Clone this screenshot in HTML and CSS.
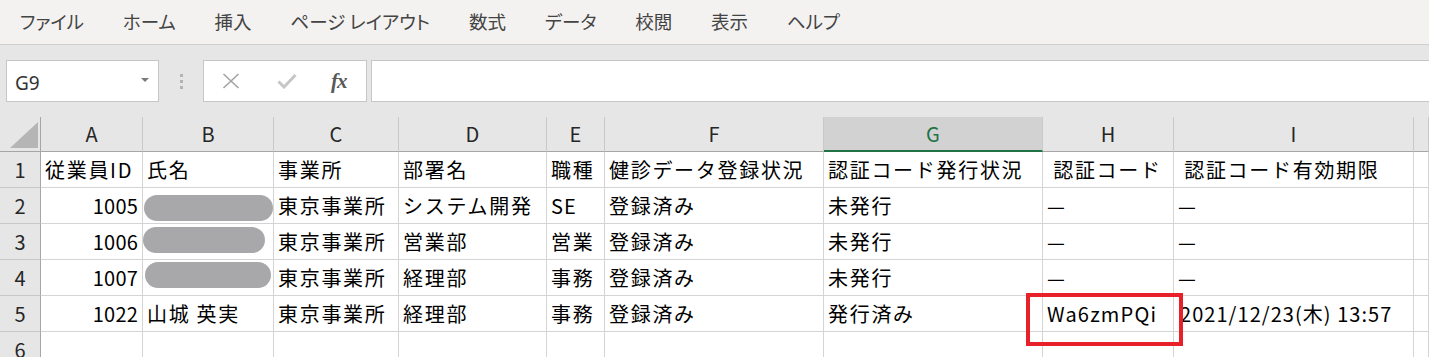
FILE: index.html
```html
<!DOCTYPE html>
<html lang="ja">
<head>
<meta charset="utf-8">
<title>Excel</title>
<link rel="stylesheet" href="styles.css">
</head>
<body>
<div class="app">
  <nav class="menu">
    <span class="menu-item">ファイル</span>
    <span class="menu-item">ホーム</span>
    <span class="menu-item">挿入</span>
    <span class="menu-item">ページ レイアウト</span>
    <span class="menu-item">数式</span>
    <span class="menu-item">データ</span>
    <span class="menu-item">校閲</span>
    <span class="menu-item">表示</span>
    <span class="menu-item">ヘルプ</span>
  </nav>
  <div class="formula-bar">
    <div class="name-box">
      <span class="name-text">G9</span>
      <svg class="dd" width="8" height="5" viewBox="0 0 8 5"><path d="M0 0h8L4 4z" fill="#7a7a7a"/></svg>
    </div>
    <div class="grip"><i></i><i></i><i></i></div>
    <div class="fx-buttons">
      <svg class="btn-x" width="18" height="16" viewBox="0 0 18 16"><path d="M1.5 1l15 14M16.5 1l-15 14" stroke="#a3a3a3" stroke-width="1.6" fill="none"/></svg>
      <svg class="btn-ok" width="20" height="16" viewBox="0 0 20 16"><path d="M1.5 8.5l5.5 5.5L18.5 2" stroke="#c6c6c6" stroke-width="3" fill="none"/></svg>
      <span class="btn-fx">fx</span>
    </div>
    <div class="formula-input"></div>
  </div>
  <div class="sheet">
    <div class="corner"><svg width="41" height="35" viewBox="0 0 41 35"><path d="M10 31L38 5V31z" fill="#b5b5b5"/></svg></div>
    <div class="ch">A</div><div class="ch">B</div><div class="ch">C</div><div class="ch">D</div><div class="ch">E</div><div class="ch">F</div><div class="ch ch-sel">G</div><div class="ch">H</div><div class="ch">I</div><div class="ch"></div>

    <div class="rh">1</div>
    <div class="c">従業員ID</div><div class="c">氏名</div><div class="c">事業所</div><div class="c">部署名</div><div class="c">職種</div><div class="c">健診データ登録状況</div><div class="c">認証コード発行状況</div><div class="c">&nbsp;認証コード</div><div class="c">&nbsp;認証コード有効期限</div><div class="c"></div>

    <div class="rh">2</div>
    <div class="c num">1005</div><div class="c redact"><span class="pill pill-2"></span></div><div class="c">東京事業所</div><div class="c">システム開発</div><div class="c lat">SE</div><div class="c">登録済み</div><div class="c">未発行</div><div class="c">—</div><div class="c">—</div><div class="c"></div>

    <div class="rh">3</div>
    <div class="c num">1006</div><div class="c redact"><span class="pill pill-3"></span></div><div class="c">東京事業所</div><div class="c">営業部</div><div class="c">営業</div><div class="c">登録済み</div><div class="c">未発行</div><div class="c">—</div><div class="c">—</div><div class="c"></div>

    <div class="rh">4</div>
    <div class="c num">1007</div><div class="c redact"><span class="pill pill-4"></span></div><div class="c">東京事業所</div><div class="c">経理部</div><div class="c">事務</div><div class="c">登録済み</div><div class="c">未発行</div><div class="c">—</div><div class="c">—</div><div class="c"></div>

    <div class="rh">5</div>
    <div class="c num">1022</div><div class="c">山城 英実</div><div class="c">東京事業所</div><div class="c">経理部</div><div class="c">事務</div><div class="c">登録済み</div><div class="c">発行済み</div><div class="c lat hl">Wa6zmPQi<span class="red-box"></span></div><div class="c lat date">2021/12/23(木) 13:57</div><div class="c"></div>

    <div class="rh">6</div>
    <div class="c"></div><div class="c"></div><div class="c"></div><div class="c"></div><div class="c"></div><div class="c"></div><div class="c"></div><div class="c"></div><div class="c"></div><div class="c"></div>
  </div>
</div>
</body>
</html>
```
FILE: styles.css
```css
* { box-sizing: border-box; }
html, body { margin: 0; padding: 0; }
body {
  width: 1429px;
  height: 357px;
  overflow: hidden;
  background: #ffffff;
  font-family: "Noto Sans CJK JP", "Noto Sans", sans-serif;
}
.app { display: flex; flex-direction: column; }

.menu {
  height: 45px;
  background: #f3f2f1;
  border-bottom: 1px solid #d2d0ce;
  display: flex;
  align-items: center;
  padding-left: 20px;
  gap: 38.8px;
  font-size: 18.5px;
  color: #444;
  font-feature-settings: "palt";
}
.menu-item { line-height: 1; padding-bottom: 2px; }

.formula-bar {
  height: 72px;
  background: #e6e6e6;
  display: flex;
  align-items: flex-start;
  padding-top: 15px;
}
.name-box {
  margin-left: 6px;
  width: 153px;
  height: 42px;
  background: #fff;
  border: 1px solid #c6c6c6;
  display: flex;
  align-items: center;
  justify-content: space-between;
  padding: 0 9px 0 8px;
}
.name-text {
  font-family: "Noto Sans", sans-serif;
  font-size: 19px;
  color: #333;
  padding-top: 4px;
}
.dd { margin-bottom: 1px; }
.grip {
  width: 44px;
  height: 42px;
  display: flex;
  flex-direction: column;
  align-items: center;
  justify-content: center;
  gap: 3px;
}
.grip i { display: block; width: 3px; height: 3px; background: #b3b3b3; }
.fx-buttons {
  width: 164px;
  height: 42px;
  background: #fff;
  border: 1px solid #c6c6c6;
  display: flex;
  align-items: center;
  padding-left: 18px;
}
.btn-x { margin-right: 37px; }
.btn-ok { margin-right: 34px; }
.btn-fx {
  font-family: "Liberation Serif", serif;
  font-style: italic;
  font-weight: bold;
  font-size: 21px;
  color: #595959;
  letter-spacing: -1px;
}
.formula-input {
  margin-left: 4px;
  flex: 1;
  height: 42px;
  background: #fff;
  border: 1px solid #c6c6c6;
  border-right: none;
}

.sheet {
  display: grid;
  grid-template-columns: 41px 102px 131px 125px 148px 58px 219px 219px 131px 240px 1fr;
  grid-template-rows: 35px repeat(6, 36px);
  background: #fff;
}
.corner {
  background: #e6e6e6;
  border-right: 1px solid #a6a6a6;
  border-bottom: 1px solid #a6a6a6;
}
.corner svg { display: block; }
.ch {
  background: #e6e6e6;
  border-right: 1px solid #c9c9c9;
  border-bottom: 1px solid #a6a6a6;
  display: flex;
  align-items: center;
  justify-content: center;
  font-size: 20px;
  color: #262626;
  padding-bottom: 1px;
}
.ch-sel {
  background: #d2d2d2;
  color: #217346;
  border-bottom: 2px solid #217346;
}
.rh {
  background: #e6e6e6;
  border-right: 1px solid #a6a6a6;
  border-bottom: 1px solid #c9c9c9;
  display: flex;
  align-items: center;
  justify-content: center;
  font-size: 20px;
  color: #262626;
}
.c {
  border-right: 1px solid #d4d4d4;
  border-bottom: 1px solid #d4d4d4;
  display: flex;
  align-items: center;
  padding-left: 4px;
  font-size: 20px;
  letter-spacing: 1.7px;
  color: #000;
  white-space: nowrap;
  overflow: visible;
  position: relative;
}
.num { justify-content: flex-end; padding-right: 4px; padding-left: 0; letter-spacing: 0.2px; }
.lat { letter-spacing: 1.2px; }
.date { padding-left: 6px; letter-spacing: 1.05px; }
.hl { padding-left: 4px; }

.redact { padding: 0; }
.pill {
  position: absolute;
  background: #a8a8aa;
  border-radius: 14px;
}
.pill-2 { left: 1px; top: 7px; width: 129px; height: 26px; }
.pill-3 { left: 0px; top: 3px; width: 122px; height: 26px; }
.pill-4 { left: 2px; top: 2px; width: 126px; height: 26px; }

.red-box {
  position: absolute;
  left: -17px;
  top: -3px;
  width: 157px;
  height: 53px;
  border: 4px solid #e8202a;
  z-index: 2;
}
```
